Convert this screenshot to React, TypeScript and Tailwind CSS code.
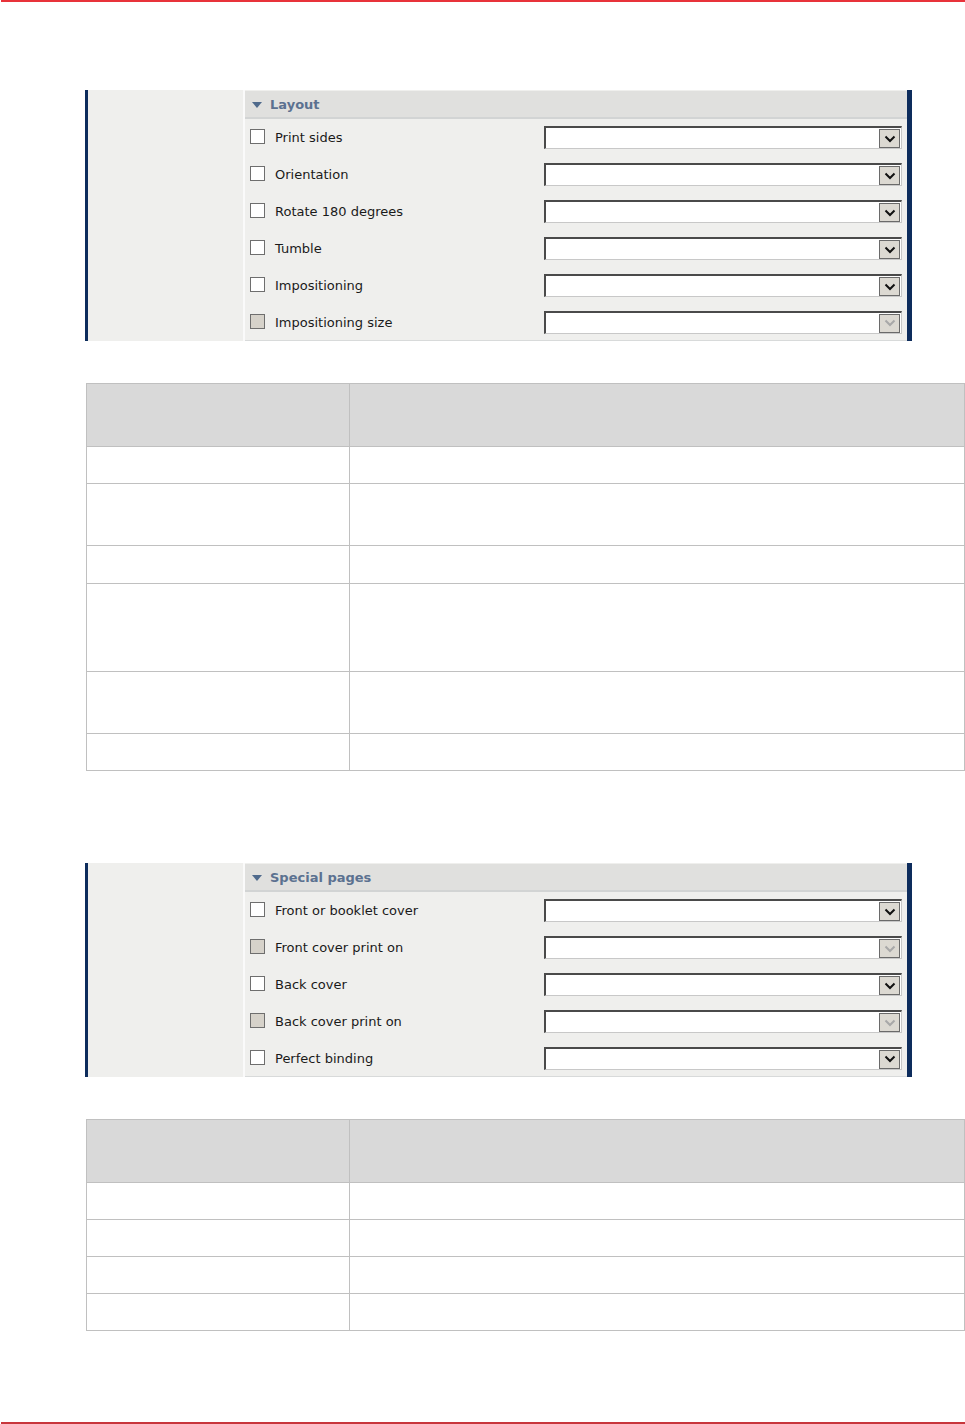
import React from "react";

const font = { fontFamily: '"DejaVu Sans", Verdana, sans-serif' };

function Checkbox({ disabled }: { disabled?: boolean }) {
  return (
    <div
      className={
        "w-[15px] h-[15px] border border-[#6e6e6e] mt-[-2px] " +
        (disabled ? "bg-[#d6d2ca]" : "bg-white")
      }
    />
  );
}

function Select({ disabled }: { disabled?: boolean }) {
  return (
    <div className="flex h-[23px] w-[358px] bg-white border-t-2 border-l-2 border-t-[#4a4a4a] border-l-[#4a4a4a] border-b border-r border-b-[#c8c8c8] border-r-[#c8c8c8]">
      <div className="flex-1" />
      <div className="w-[21px] h-[19px] mt-[1px] mr-[1px] bg-[#dcd9d2] border border-[#6a6a6a] flex items-center justify-center">
        <svg width="12" height="8" viewBox="0 0 12 8">
          <path
            d="M1.5 1.5 L6 6 L10.5 1.5"
            fill="none"
            stroke={disabled ? "#a8a8a8" : "#111"}
            strokeWidth="2"
          />
        </svg>
      </div>
    </div>
  );
}

function Panel({
  title,
  rows,
}: {
  title: string;
  rows: { label: string; disabled?: boolean }[];
}) {
  return (
    <div className="flex ml-[85px] w-[827px] bg-[#efefed]" style={font}>
      <div className="w-[3px] bg-[#0d2c5c]" />
      <div className="w-[155px] bg-[#efefed]" />
      <div className="w-[2px] bg-[#fafafa]" />
      <div className="w-[662px] flex flex-col pt-[1px]">
        <div className="h-[28px] bg-[#e0e0de] border-b-2 border-[#d2d4d4] flex items-center pl-[7px] gap-[8px] pt-[1px]">
          <svg width="10" height="6" viewBox="0 0 10 6">
            <path d="M0 0 L10 0 L5 6 Z" fill="#4f6a8c" />
          </svg>
          <span className="text-[13px] font-bold text-[#5b7190]">{title}</span>
        </div>
        {rows.map((r, i) => (
          <div
            key={i}
            className={
              "flex items-center h-[37px] " +
              (i === rows.length - 1 ? "border-b border-[#d8dada]" : "")
            }
          >
            <div className="w-[30px] pl-[5px] flex items-center">
              <Checkbox disabled={r.disabled} />
            </div>
            <div className="w-[269px] text-[13px] text-[#1a1a1a] pt-[1px]">{r.label}</div>
            <Select disabled={r.disabled} />
          </div>
        ))}
      </div>
      <div className="w-[5px] bg-[#0d2c5c]" />
    </div>
  );
}

function Table({ rows }: { rows: number[] }) {
  return (
    <div className="ml-[86px] w-[879px] border-t border-l border-[#c0c0c0]">
      <div className="flex h-[63px] bg-[#d9d9d9] border-b border-[#c0c0c0]">
        <div className="w-[263px] border-r border-[#c0c0c0]" />
        <div className="flex-1 border-r border-[#c0c0c0]" />
      </div>
      {rows.map((h, i) => (
        <div
          key={i}
          className="flex border-b border-[#c0c0c0] bg-white"
          style={{ height: h }}
        >
          <div className="w-[263px] border-r border-[#c0c0c0]" />
          <div className="flex-1 border-r border-[#c0c0c0]" />
        </div>
      ))}
    </div>
  );
}

export default function App() {
  return (
    <div className="w-[965px] h-[1424px] bg-white flex flex-col relative">
      <div className="h-[2px] bg-[#e8323a] ml-[1px]" />
      <div className="h-[88px]" />
      <Panel
        title="Layout"
        rows={[
          { label: "Print sides" },
          { label: "Orientation" },
          { label: "Rotate 180 degrees" },
          { label: "Tumble" },
          { label: "Impositioning" },
          { label: "Impositioning size", disabled: true },
        ]}
      />
      <div className="h-[42px]" />
      <Table rows={[37, 62, 38, 88, 62, 37]} />
      <div className="h-[92px]" />
      <Panel
        title="Special pages"
        rows={[
          { label: "Front or booklet cover" },
          { label: "Front cover print on", disabled: true },
          { label: "Back cover" },
          { label: "Back cover print on", disabled: true },
          { label: "Perfect binding" },
        ]}
      />
      <div className="h-[42px]" />
      <Table rows={[37, 37, 37, 37]} />
      <div className="flex-1" />
      <div className="h-[2px] bg-[#c8363c] ml-[1px]" />
    </div>
  );
}
